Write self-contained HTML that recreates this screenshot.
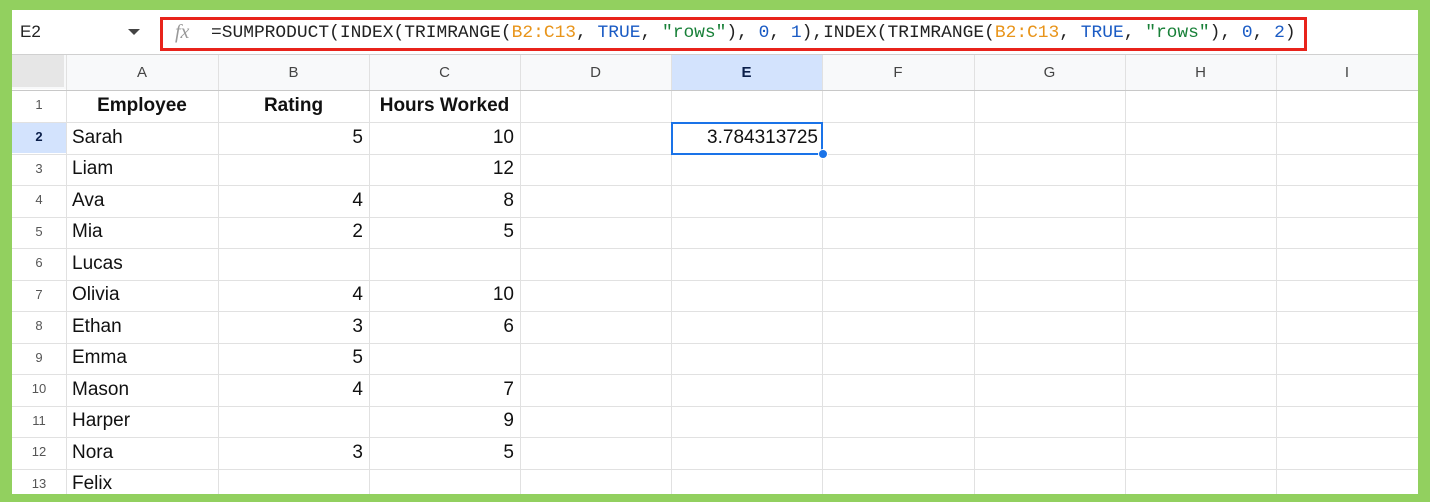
<!DOCTYPE html>
<html><head><style>
body{margin:0;width:1430px;height:502px;background:#92d05f;position:relative;overflow:hidden;font-family:"Liberation Sans",Arial,sans-serif}
#s{position:absolute;left:12px;top:10px;width:1406px;height:484px;background:#fff;overflow:hidden}
.a{position:absolute;box-sizing:border-box}
.hl{position:absolute;height:1px;background:#e1e1e1;left:0;width:1406px}
.vl{position:absolute;width:1px;background:#e1e1e1;top:45px;height:440px}
.ch{position:absolute;top:45px;height:35px;line-height:35px;text-align:center;font-size:15px;color:#444}
.rh{position:absolute;left:0;width:54px;text-align:center;font-size:13px;color:#555}
.c{position:absolute;font-size:19px;color:#111;white-space:nowrap}
.f{font-family:"Liberation Mono",monospace;font-size:17.9px;color:#222}
.o{color:#e8941a}.b{color:#1a5bc4}.g{color:#188038}
</style></head><body>
<div id="s">
<div class="a" style="left:8px;top:12px;font-size:17px;color:#222">E2</div>
<div class="a" style="left:116px;top:19px;width:0;height:0;border-left:6px solid transparent;border-right:6px solid transparent;border-top:6px solid #444"></div>
<div class="a" style="left:148px;top:7px;width:1147px;height:34px;border:3px solid #e8231b"></div>
<div class="a" style="left:163px;top:11px;font-family:'Liberation Serif',serif;font-style:italic;font-size:20px;color:#999">fx</div>
<div class="a f" style="left:199px;top:13px;white-space:nowrap">=SUMPRODUCT(INDEX(TRIMRANGE(<span class="o">B2:C13</span>, <span class="b">TRUE</span>, <span class="g">"rows"</span>), <span class="b">0</span>, <span class="b">1</span>),INDEX(TRIMRANGE(<span class="o">B2:C13</span>, <span class="b">TRUE</span>, <span class="g">"rows"</span>), <span class="b">0</span>, <span class="b">2</span>)</div>
<div class="hl" style="top:44px;background:#d0d0d0"></div>
<div class="a" style="left:0;top:45px;width:54px;height:34px;background:#f8f9fa"></div>
<div class="a" style="left:0;top:45px;width:52px;height:32px;background:#e6e6e6"></div>
<div class="a" style="left:54px;top:45px;width:1352px;height:35px;background:#f8f9fa"></div>
<div class="a" style="left:659px;top:45px;width:151px;height:35px;background:#d3e3fd"></div>
<div class="a" style="left:0;top:112px;width:54px;height:31px;background:#d3e3fd"></div>
<div class="ch" style="left:54px;width:152px">A</div>
<div class="ch" style="left:206px;width:151px">B</div>
<div class="ch" style="left:357px;width:151px">C</div>
<div class="ch" style="left:508px;width:151px">D</div>
<div class="ch" style="left:659px;width:151px;font-weight:bold;color:#0b1f4a">E</div>
<div class="ch" style="left:810px;width:152px">F</div>
<div class="ch" style="left:962px;width:151px">G</div>
<div class="ch" style="left:1113px;width:151px">H</div>
<div class="ch" style="left:1264px;width:142px">I</div>
<div class="vl" style="left:54px"></div><div class="vl" style="left:206px"></div><div class="vl" style="left:357px"></div><div class="vl" style="left:508px"></div><div class="vl" style="left:659px"></div><div class="vl" style="left:810px"></div><div class="vl" style="left:962px"></div><div class="vl" style="left:1113px"></div><div class="vl" style="left:1264px"></div>
<div class="hl" style="top:80px;background:#c8c8c8"></div>
<div class="hl" style="top:112px"></div><div class="hl" style="top:144px"></div><div class="hl" style="top:175px"></div><div class="hl" style="top:207px"></div><div class="hl" style="top:238px"></div><div class="hl" style="top:270px"></div><div class="hl" style="top:301px"></div><div class="hl" style="top:333px"></div><div class="hl" style="top:364px"></div><div class="hl" style="top:396px"></div><div class="hl" style="top:427px"></div><div class="hl" style="top:459px"></div>
<div class="rh" style="top:87px">1</div><div class="rh" style="top:119px;font-weight:bold;color:#0b1f4a">2</div><div class="rh" style="top:151px">3</div><div class="rh" style="top:182px">4</div><div class="rh" style="top:214px">5</div><div class="rh" style="top:245px">6</div><div class="rh" style="top:277px">7</div><div class="rh" style="top:308px">8</div><div class="rh" style="top:340px">9</div><div class="rh" style="top:371px">10</div><div class="rh" style="top:403px">11</div><div class="rh" style="top:434px">12</div><div class="rh" style="top:466px">13</div>
<div class="c" style="left:54px;width:152px;text-align:center;top:85px;font-weight:bold">Employee</div>
<div class="c" style="left:206px;width:151px;text-align:center;top:85px;font-weight:bold">Rating</div>
<div class="c" style="left:357px;width:151px;text-align:center;top:85px;font-weight:bold">Hours Worked</div>
<div class="c" style="left:60px;top:117px">Sarah</div><div class="c" style="left:60px;top:148px">Liam</div><div class="c" style="left:60px;top:180px">Ava</div><div class="c" style="left:60px;top:211px">Mia</div><div class="c" style="left:60px;top:243px">Lucas</div><div class="c" style="left:60px;top:274px">Olivia</div><div class="c" style="left:60px;top:306px">Ethan</div><div class="c" style="left:60px;top:337px">Emma</div><div class="c" style="left:60px;top:369px">Mason</div><div class="c" style="left:60px;top:400px">Harper</div><div class="c" style="left:60px;top:432px">Nora</div><div class="c" style="left:60px;top:463px">Felix</div>
<div class="c" style="right:1055px;top:117px">5</div><div class="c" style="right:1055px;top:180px">4</div><div class="c" style="right:1055px;top:211px">2</div><div class="c" style="right:1055px;top:274px">4</div><div class="c" style="right:1055px;top:306px">3</div><div class="c" style="right:1055px;top:337px">5</div><div class="c" style="right:1055px;top:369px">4</div><div class="c" style="right:1055px;top:432px">3</div>
<div class="c" style="right:904px;top:117px">10</div><div class="c" style="right:904px;top:148px">12</div><div class="c" style="right:904px;top:180px">8</div><div class="c" style="right:904px;top:211px">5</div><div class="c" style="right:904px;top:274px">10</div><div class="c" style="right:904px;top:306px">6</div><div class="c" style="right:904px;top:369px">7</div><div class="c" style="right:904px;top:400px">9</div><div class="c" style="right:904px;top:432px">5</div>
<div class="a" style="left:659px;top:112px;width:152px;height:33px;border:2px solid #1a73e8"></div>
<div class="c" style="right:600px;top:117px">3.784313725</div>
<div class="a" style="left:806px;top:139px;width:10px;height:10px;border-radius:50%;background:#1a73e8;border:1px solid #fff"></div>
</div>
</body></html>
